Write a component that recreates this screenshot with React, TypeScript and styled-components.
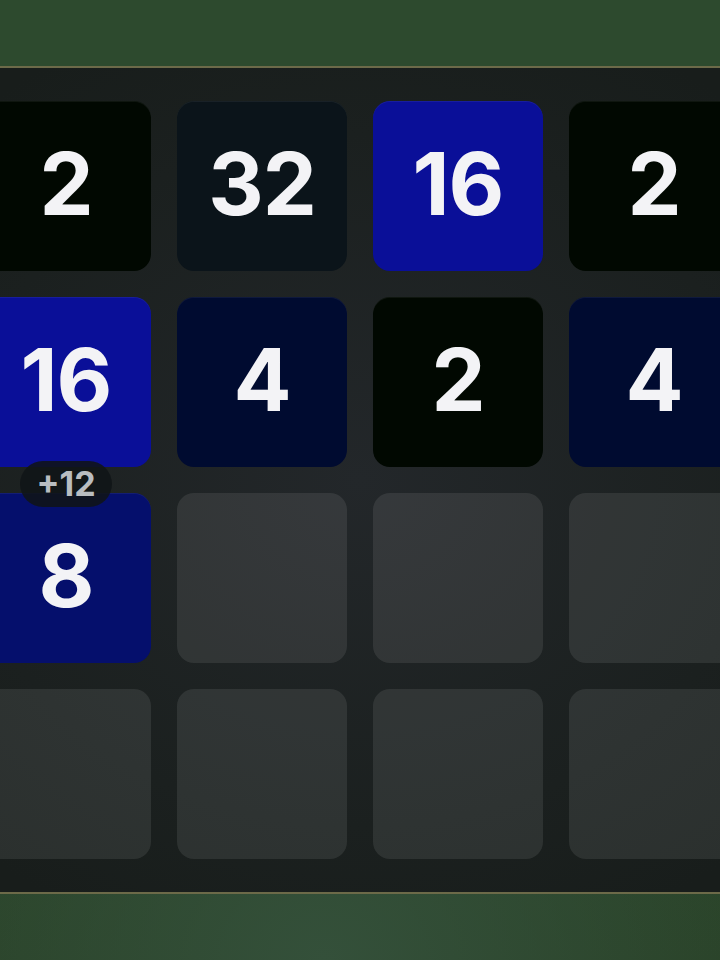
import React from 'react';
import styled, { createGlobalStyle } from 'styled-components';

const GlobalStyle = createGlobalStyle`
  html, body {
    margin: 0;
    padding: 0;
    background: #2d4a2e;
  }
  body {
    font-family: Inter, "Noto Sans", "Liberation Sans", sans-serif;
  }
`;

const tileColors: Record<number, string> = {
  0: 'rgba(255, 255, 255, 0.085)',
  2: '#010801',
  4: '#000b30',
  8: '#050f6c',
  16: '#0a0f98',
  32: '#0b141a',
};

const cells: number[] = [
  2, 32, 16, 2,
  16, 4, 2, 4,
  8, 0, 0, 0,
  0, 0, 0, 0,
];

export default function App() {
  return (
    <>
      <GlobalStyle />
      <Page>
        <Board>
          {cells.map((value, i) => (
            <Tile key={i} $value={value}>
              {value > 0 && value}
              {i === 8 && <ScorePop>+12</ScorePop>}
            </Tile>
          ))}
        </Board>
      </Page>
    </>
  );
}

const Page = styled.div`
  width: 720px;
  height: 960px;
  overflow: hidden;
  display: flex;
  align-items: center;
  justify-content: center;
  background:
    radial-gradient(ellipse 60% 40% at 45% 100%, #34503a 0%, rgba(52, 80, 58, 0) 100%),
    linear-gradient(180deg, #2d4a2e 0%, #2d4a2e 50%, #2a4329 100%);
`;

const Board = styled.div`
  flex: none;
  display: grid;
  grid-template-columns: repeat(4, 170px);
  grid-auto-rows: 170px;
  gap: 26px;
  padding: 33px;
  border: 2px solid #6c6a49;
  background: radial-gradient(ellipse 70% 60% at 50% 50%, #23272a 0%, #1b201f 70%, #181d1b 100%);
`;

const Tile = styled.div<{ $value: number }>`
  position: relative;
  display: flex;
  align-items: center;
  justify-content: center;
  padding-bottom: 4px;
  box-sizing: border-box;
  border-radius: 17px;
  background: ${(p) => tileColors[p.$value] ?? '#0a0f98'};
  box-shadow: ${(p) => (p.$value ? 'inset 0 1px 0 rgba(255, 255, 255, 0.06)' : 'none')};
  color: #f3f3f6;
  font-size: 86px;
  font-weight: 700;
  letter-spacing: -1px;
  line-height: 1;
`;

const ScorePop = styled.div`
  position: absolute;
  top: -32px;
  left: 50%;
  transform: translateX(-50%);
  width: 92px;
  height: 46px;
  border-radius: 23px;
  display: flex;
  align-items: center;
  justify-content: center;
  background: rgba(16, 20, 23, 0.88);
  color: #b9bdc1;
  font-size: 34px;
  font-weight: 700;
  letter-spacing: 0;
`;
